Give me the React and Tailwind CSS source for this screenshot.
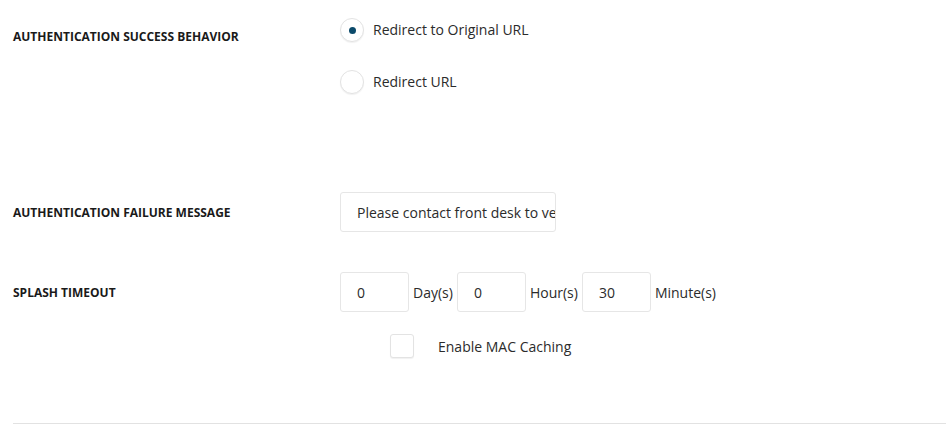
import React from 'react';

const font = { fontFamily: '"Open Sans", "Liberation Sans", sans-serif' };

const Label = ({ children, className = '' }) => (
  <div className={`w-[327px] shrink-0 text-[12px] font-bold uppercase leading-[16px] text-[#1a1a1a] ${className}`}>
    {children}
  </div>
);

const Radio = ({ checked, label }) => (
  <label className="flex items-center h-6">
    <span className="w-6 h-6 rounded-full border border-[#e3e3e3] shadow-[0_1px_1px_rgba(0,0,0,0.06)] bg-white flex items-center justify-center">
      {checked && <span className="w-[7px] h-[7px] rounded-full bg-[#0b4a6a]" />}
    </span>
    <span className="ml-[9px] text-[14px] leading-[20px] -mt-[1px] text-[#2b2b2b]">{label}</span>
  </label>
);

const NumBox = ({ value }) => (
  <input
    readOnly
    value={value}
    className="w-[69px] h-10 rounded-[3px] border border-[#e6e6e6] bg-white px-4 text-[14px] text-[#2b2b2b] outline-none"
    style={font}
  />
);

export default function App() {
  return (
    <div className="w-[946px] h-[425px] bg-white overflow-hidden" style={font}>
      <div className="pl-[13px]">
        <div className="flex">
          <Label className="pt-[29px]">Authentication Success Behavior</Label>
          <div className="pt-[18px] flex flex-col gap-[28px]">
            <Radio checked label="Redirect to Original URL" />
            <Radio label="Redirect URL" />
          </div>
        </div>

        <div className="flex items-center mt-[98px]">
          <Label className="pt-[2px]">Authentication Failure Message</Label>
          <input
            readOnly
            value="Please contact front desk to verify your access"
            className="w-[216px] h-10 rounded-[3px] border border-[#e6e6e6] bg-white pl-4 pr-0 text-[14px] text-[#2b2b2b] outline-none"
            style={font}
          />
        </div>

        <div className="flex items-center mt-10">
          <Label className="pt-[2px]">Splash Timeout</Label>
          <div className="flex items-center gap-1 text-[14px] text-[#2b2b2b]">
            <NumBox value="0" />
            <span>Day(s)</span>
            <NumBox value="0" />
            <span>Hour(s)</span>
            <NumBox value="30" />
            <span>Minute(s)</span>
          </div>
        </div>

        <div className="flex items-center mt-[22px] pl-[377px]">
          <span className="w-6 h-6 rounded-[3px] border border-[#e3e3e3] shadow-[0_1px_1px_rgba(0,0,0,0.06)] bg-white" />
          <span className="ml-6 text-[14px] text-[#2b2b2b]">Enable MAC Caching</span>
        </div>

        <div className="mt-[65px] h-px bg-[#e2e2e2]" />
      </div>
    </div>
  );
}
